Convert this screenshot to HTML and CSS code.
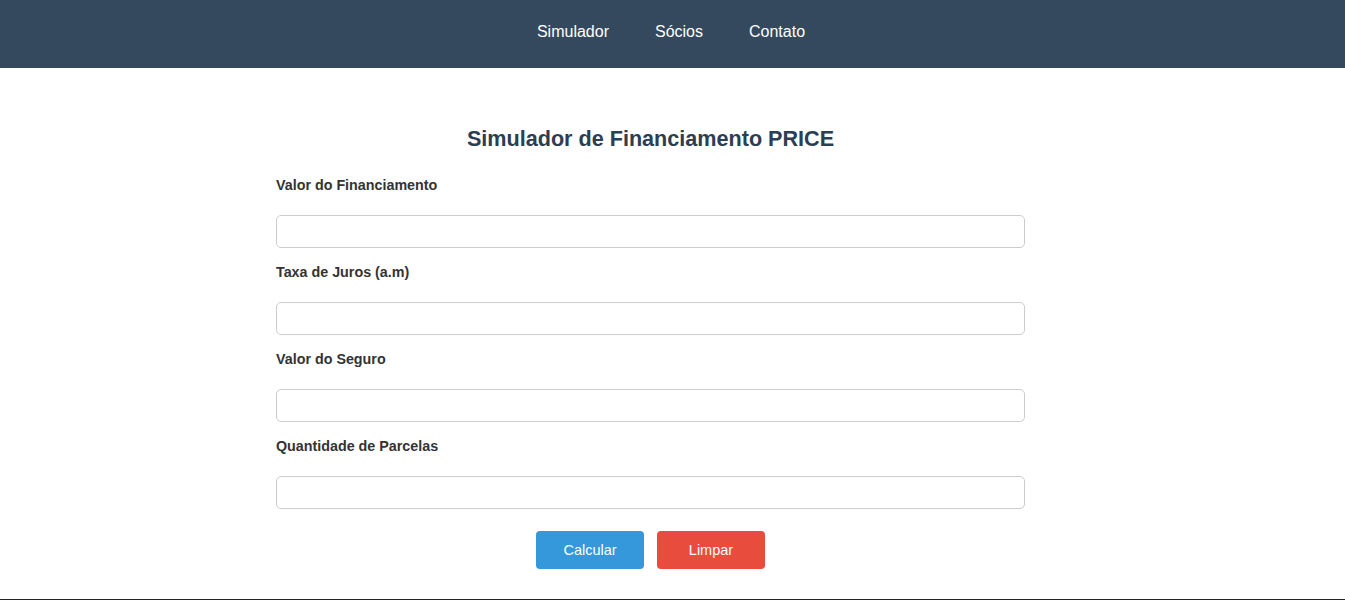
FILE: index.html
```html
<!DOCTYPE html>
<html lang="pt-BR">
<head>
<meta charset="utf-8">
<title>Simulador de Financiamento PRICE</title>
<link rel="stylesheet" href="styles.css">
</head>
<body>
<header class="navbar">
  <nav class="nav">
    <a class="nav-link" href="#">Simulador</a>
    <a class="nav-link" href="#">Sócios</a>
    <a class="nav-link" href="#">Contato</a>
  </nav>
</header>
<main class="container">
  <h2 class="title">Simulador de Financiamento PRICE</h2>
  <form class="form">
    <label class="label" for="valor">Valor do Financiamento</label>
    <input class="input" id="valor" type="text">
    <label class="label" for="taxa">Taxa de Juros (a.m)</label>
    <input class="input" id="taxa" type="text">
    <label class="label" for="seguro">Valor do Seguro</label>
    <input class="input" id="seguro" type="text">
    <label class="label" for="parcelas">Quantidade de Parcelas</label>
    <input class="input" id="parcelas" type="text">
    <div class="actions">
      <button class="btn btn-blue" type="button">Calcular</button>
      <button class="btn btn-red" type="reset">Limpar</button>
    </div>
  </form>
</main>
<footer class="footer"></footer>
</body>
</html>
```
FILE: styles.css
```css
* { box-sizing: border-box; }
html, body { margin: 0; padding: 0; }
body {
  font-family: "Liberation Sans", Arial, sans-serif;
  background: #fff;
  color: #333;
}
.navbar {
  background: #34495e;
  height: 68px;
  padding-bottom: 4px;
  display: flex;
  align-items: center;
  justify-content: center;
}
.nav {
  display: flex;
  gap: 46px;
  padding-right: 3px;
}
.nav-link {
  color: #fff;
  text-decoration: none;
  font-size: 16px;
}
.container {
  width: 749px;
  margin-left: 276px;
  padding-top: 56px;
}
.title {
  margin: 0 0 23px;
  text-align: center;
  font-size: 21.6px;
  line-height: 30px;
  color: #2c3e50;
}
.form {
  display: flex;
  flex-direction: column;
}
.label {
  display: block;
  font-size: 14.3px;
  font-weight: bold;
  line-height: 16px;
  color: #333;
  margin-bottom: 22px;
}
.input {
  height: 33px;
  width: 100%;
  border: 1px solid #ccc;
  border-radius: 5px;
  margin-bottom: 16px;
  font-family: inherit;
  font-size: 14px;
  padding: 0 10px;
}
.input:last-of-type { margin-bottom: 0; }
.actions {
  display: flex;
  justify-content: center;
  gap: 13px;
  margin-top: 22px;
}
.btn {
  width: 108px;
  height: 38px;
  border: none;
  border-radius: 4px;
  color: #fff;
  font-family: inherit;
  font-size: 14.5px;
  cursor: pointer;
}
.btn-blue { background: #3498db; }
.btn-red { background: #e74c3c; }
.footer {
  margin-top: 30px;
  height: 40px;
  background: #222;
}
```
